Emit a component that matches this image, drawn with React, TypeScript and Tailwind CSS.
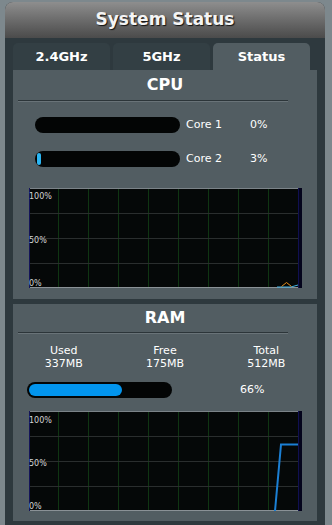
import React from "react";

const font = { fontFamily: '"DejaVu Sans", Verdana, sans-serif' };

function Chart({ kind }: { kind: "cpu" | "ram" }) {
  const vlines = [29.5, 59.5, 89.5, 119.5, 149.5, 179.5, 209.5, 239.5];
  const hlines = [25.5, 50.5, 75.5];
  return (
    <svg width={273} height={100} viewBox="0 0 273 100" className="block">
      <rect x={0} y={0} width={273} height={100} fill="#050808" />
      {vlines.map((x) => (
        <line key={x} x1={x} y1={0} x2={x} y2={100} stroke="#0f3512" strokeWidth={1} />
      ))}
      {hlines.map((y) => (
        <line key={y} x1={0} y1={y} x2={269} y2={y} stroke="#2a2e2e" strokeWidth={1} />
      ))}
      <line x1={0} y1={0.5} x2={269} y2={0.5} stroke="#7b8388" strokeWidth={1} />
      <line x1={0} y1={99.5} x2={269} y2={99.5} stroke="#8a9196" strokeWidth={1} />
      <line x1={0.5} y1={0} x2={0.5} y2={100} stroke="#14145a" strokeWidth={1} />
      <rect x={269} y={0} width={4} height={100} fill="#04041c" />
      <line x1={269.5} y1={0} x2={269.5} y2={100} stroke="#101050" strokeWidth={1} />
      <text x={0} y={kind === "cpu" ? 11 : 12} fontSize={8} fill="#d4d4d4" style={font}>100%</text>
      <text x={0} y={55} fontSize={8} fill="#d4d4d4" style={font}>50%</text>
      <text x={0} y={98} fontSize={8} fill="#d4d4d4" style={font}>0%</text>
      {kind === "cpu" ? (
        <>
          <polyline points="248,99 262,99 269,97" fill="none" stroke="#3fb2e6" strokeWidth={1} />
          <polyline points="252.5,98.5 257.5,94.5 262.5,98.5" fill="none" stroke="#e8901c" strokeWidth={1} />
        </>
      ) : (
        <polyline points="246,100 252,33.5 269,33.5" fill="none" stroke="#1b7fd4" strokeWidth={2} />
      )}
    </svg>
  );
}

function Divider() {
  return (
    <div className="ml-[5px] w-[270px]">
      <div className="h-px bg-[#2c3539]" />
      <div className="h-px bg-[#697378]" />
    </div>
  );
}

export default function App() {
  return (
    <div className="w-[332px] h-[525px] bg-[#7d888d] pt-[2px] overflow-hidden" style={font}>
      <div className="ml-[5px] w-[320px] h-[523px] bg-[#2e393e] rounded-t-[8px] flex flex-col">
        <div className="h-[36px] rounded-t-[8px] bg-gradient-to-b from-[#8e8e8e] to-[#4b4b4b] flex items-center justify-center">
          <span
            className="text-[17px] font-bold text-[#f4f4f4]"
            style={{ textShadow: "1px 1px 1px #111" }}
          >
            System Status
          </span>
        </div>
        <div className="pt-[5px] pl-[8px] flex gap-[3px]">
          <div className="w-[97px] h-[27px] rounded-t-[5px] bg-[#333f44] flex items-center justify-center text-[13px] font-bold text-white">
            2.4GHz
          </div>
          <div className="w-[97px] h-[27px] rounded-t-[5px] bg-[#333f44] flex items-center justify-center text-[13px] font-bold text-white">
            5GHz
          </div>
          <div className="w-[97px] h-[27px] rounded-t-[5px] bg-[#525d62] flex items-center justify-center text-[13px] font-bold text-white">
            Status
          </div>
        </div>
        {/* CPU panel */}
        <div className="ml-[8px] w-[304px] h-[229px] bg-[#525d62] flex flex-col">
          <div className="h-[30px] flex items-center justify-center text-[16px] font-bold text-white">
            CPU
          </div>
          <Divider />
          <div className="mt-[15px] h-[16px] flex items-center">
            <div className="ml-[22px] w-[145px] h-[16px] rounded-full bg-[#030505]" />
            <span className="ml-[6px] w-[64px] text-[11px] text-white">Core 1</span>
            <span className="text-[11px] text-white">0%</span>
          </div>
          <div className="mt-[18px] h-[16px] flex items-center">
            <div className="ml-[22px] w-[145px] h-[16px] rounded-full bg-[#030505] p-[2px] flex">
              <div className="w-[4px] h-[12px] rounded-full bg-[#2bb5f2]" />
            </div>
            <span className="ml-[6px] w-[64px] text-[11px] text-white">Core 2</span>
            <span className="text-[11px] text-white">3%</span>
          </div>
          <div className="mt-[21px] ml-[16px]">
            <Chart kind="cpu" />
          </div>
        </div>
        <div className="h-[5px]" />
        {/* RAM panel */}
        <div className="ml-[8px] w-[304px] h-[217px] bg-[#525d62] flex flex-col">
          <div className="h-[28px] flex items-center justify-center text-[16px] font-bold text-white">
            RAM
          </div>
          <Divider />
          <div className="mt-[10px] grid grid-cols-3 text-[11px] leading-[13px] text-white text-center">
            <div>
              <div>Used</div>
              <div>337MB</div>
            </div>
            <div>
              <div>Free</div>
              <div>175MB</div>
            </div>
            <div>
              <div>Total</div>
              <div>512MB</div>
            </div>
          </div>
          <div className="mt-[12px] h-[16px] flex items-center">
            <div className="ml-[14px] w-[145px] h-[16px] rounded-full bg-[#030505] p-[2px] flex">
              <div className="w-[93px] h-[12px] rounded-full bg-[#0295ee]" />
            </div>
            <span className="ml-[68px] text-[11px] text-white">66%</span>
          </div>
          <div className="mt-[13px] ml-[16px]">
            <Chart kind="ram" />
          </div>
        </div>
      </div>
    </div>
  );
}
